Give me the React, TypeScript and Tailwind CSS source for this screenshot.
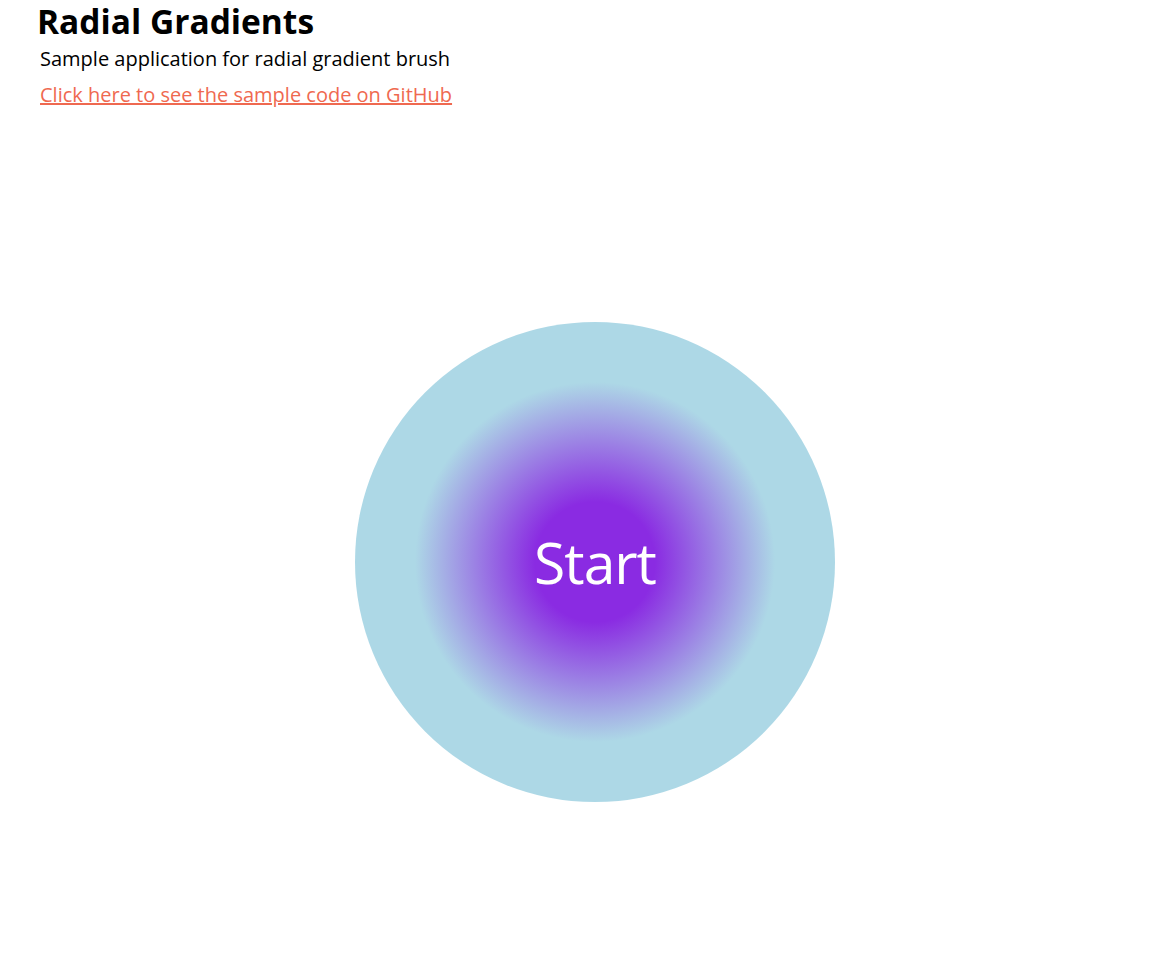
import React from "react";

const App = () => {
  return (
    <div className="min-h-[964px] w-[1168px] bg-white font-['Open_Sans',sans-serif] text-black">
      <div className="pl-[37px]">
        <h1 className="text-[33.5px] font-bold leading-[42px]">
          Radial Gradients
        </h1>
        <p className="mt-[2px] pl-[3px] text-[20px] leading-[30px]">
          Sample application for radial gradient brush
        </p>
        <a
          href="#"
          className="mt-[6px] block pl-[3px] text-[20px] leading-[30px] text-[#ef6950] underline"
        >
          Click here to see the sample code on GitHub
        </a>
      </div>

      {/* Start button */}
      <div className="flex justify-center pl-[22px] pt-[212px]">
        <button className="flex h-[480px] w-[480px] items-center justify-center rounded-full bg-[radial-gradient(circle_closest-side,#8a2be2_25%,#add8e6_75%)]">
          <span className="text-[57px] leading-none tracking-[-1px] text-white">
            Start
          </span>
        </button>
      </div>
    </div>
  );
};

export default App;
